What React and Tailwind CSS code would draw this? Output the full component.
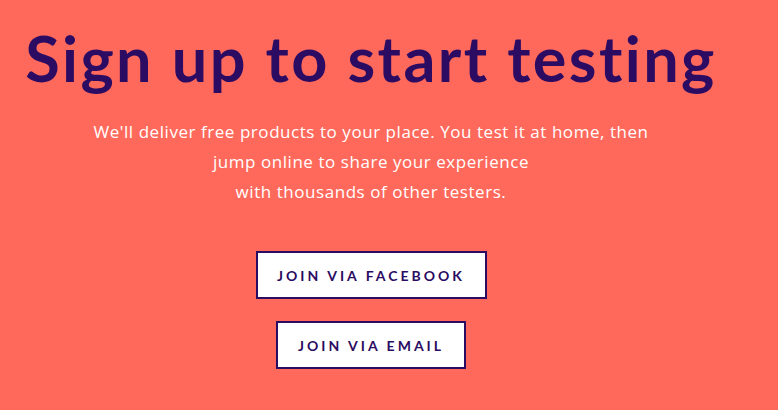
import React from "react";

const App = () => {
  return (
    <div className="w-[778px] h-[410px] bg-[#ff695b] overflow-hidden">
      <div className="w-[742px] flex flex-col items-center">
        <h1 className="mt-[18px] text-[63px] leading-[80px] font-bold text-[#2b0c62] tracking-[2.4px] [font-family:'Lato',sans-serif] whitespace-nowrap">
          Sign up to start testing
        </h1>
        <p className="mt-[19px] text-center text-white text-[17px] leading-[30px] tracking-[0.55px] [font-family:'Open_Sans',sans-serif]">
          We'll deliver free products to your place. You test it at home, then
          <br />
          jump online to share your experience
          <br />
          with thousands of other testers.
        </p>
        <div className="mt-[44px] flex flex-col items-center gap-[22px]">
          <button className="h-[48px] w-[231px] bg-white border-2 border-[#2b0c62] text-[#2b0c62] text-[14px] font-bold tracking-[3px] [font-family:'Lato',sans-serif]">
            JOIN VIA FACEBOOK
          </button>
          <button className="h-[48px] w-[190px] bg-white border-2 border-[#2b0c62] text-[#2b0c62] text-[14px] font-bold tracking-[3px] [font-family:'Lato',sans-serif]">
            JOIN VIA EMAIL
          </button>
        </div>
      </div>
    </div>
  );
};

export default App;
